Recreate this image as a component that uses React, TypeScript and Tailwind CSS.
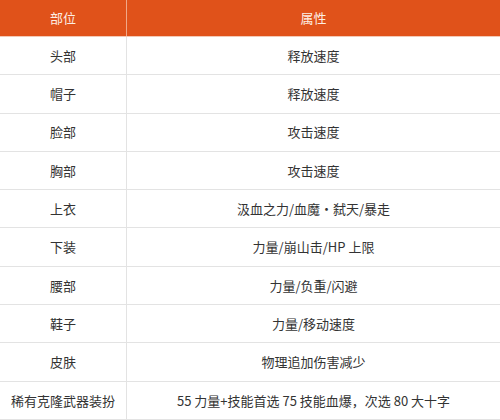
import React from "react";

const rows: [string, string][] = [
  ["头部", "释放速度"],
  ["帽子", "释放速度"],
  ["脸部", "攻击速度"],
  ["胸部", "攻击速度"],
  ["上衣", "汲血之力/血魔·弑天/暴走"],
  ["下装", "力量/崩山击/HP 上限"],
  ["腰部", "力量/负重/闪避"],
  ["鞋子", "力量/移动速度"],
  ["皮肤", "物理追加伤害减少"],
  ["稀有克隆武器装扮", "55 力量+技能首选 75 技能血爆，次选 80 大十字"],
];

export default function App() {
  return (
    <div
      className="w-[500px] h-[420px] overflow-hidden bg-white text-[13px] text-[#333333]"
      style={{ fontFamily: '"Microsoft YaHei", "Noto Sans CJK SC", sans-serif' }}
    >
      <div className="flex h-[37px] bg-[#e0521a] text-[#fdeee4] border-b border-[#f3c9b6]">
        <div className="w-[127px] flex items-center justify-center border-r border-[#f0a888]">部位</div>
        <div className="flex-1 flex items-center justify-center">属性</div>
      </div>
      {rows.map(([a, b], i) => (
        <div key={i} className="flex h-[38.3px] border-b border-[#e3e3e3]">
          <div className="w-[127px] flex items-center justify-center border-r border-[#e3e3e3] whitespace-nowrap">{a}</div>
          <div className="flex-1 flex items-center justify-center whitespace-nowrap">{b}</div>
        </div>
      ))}
    </div>
  );
}
